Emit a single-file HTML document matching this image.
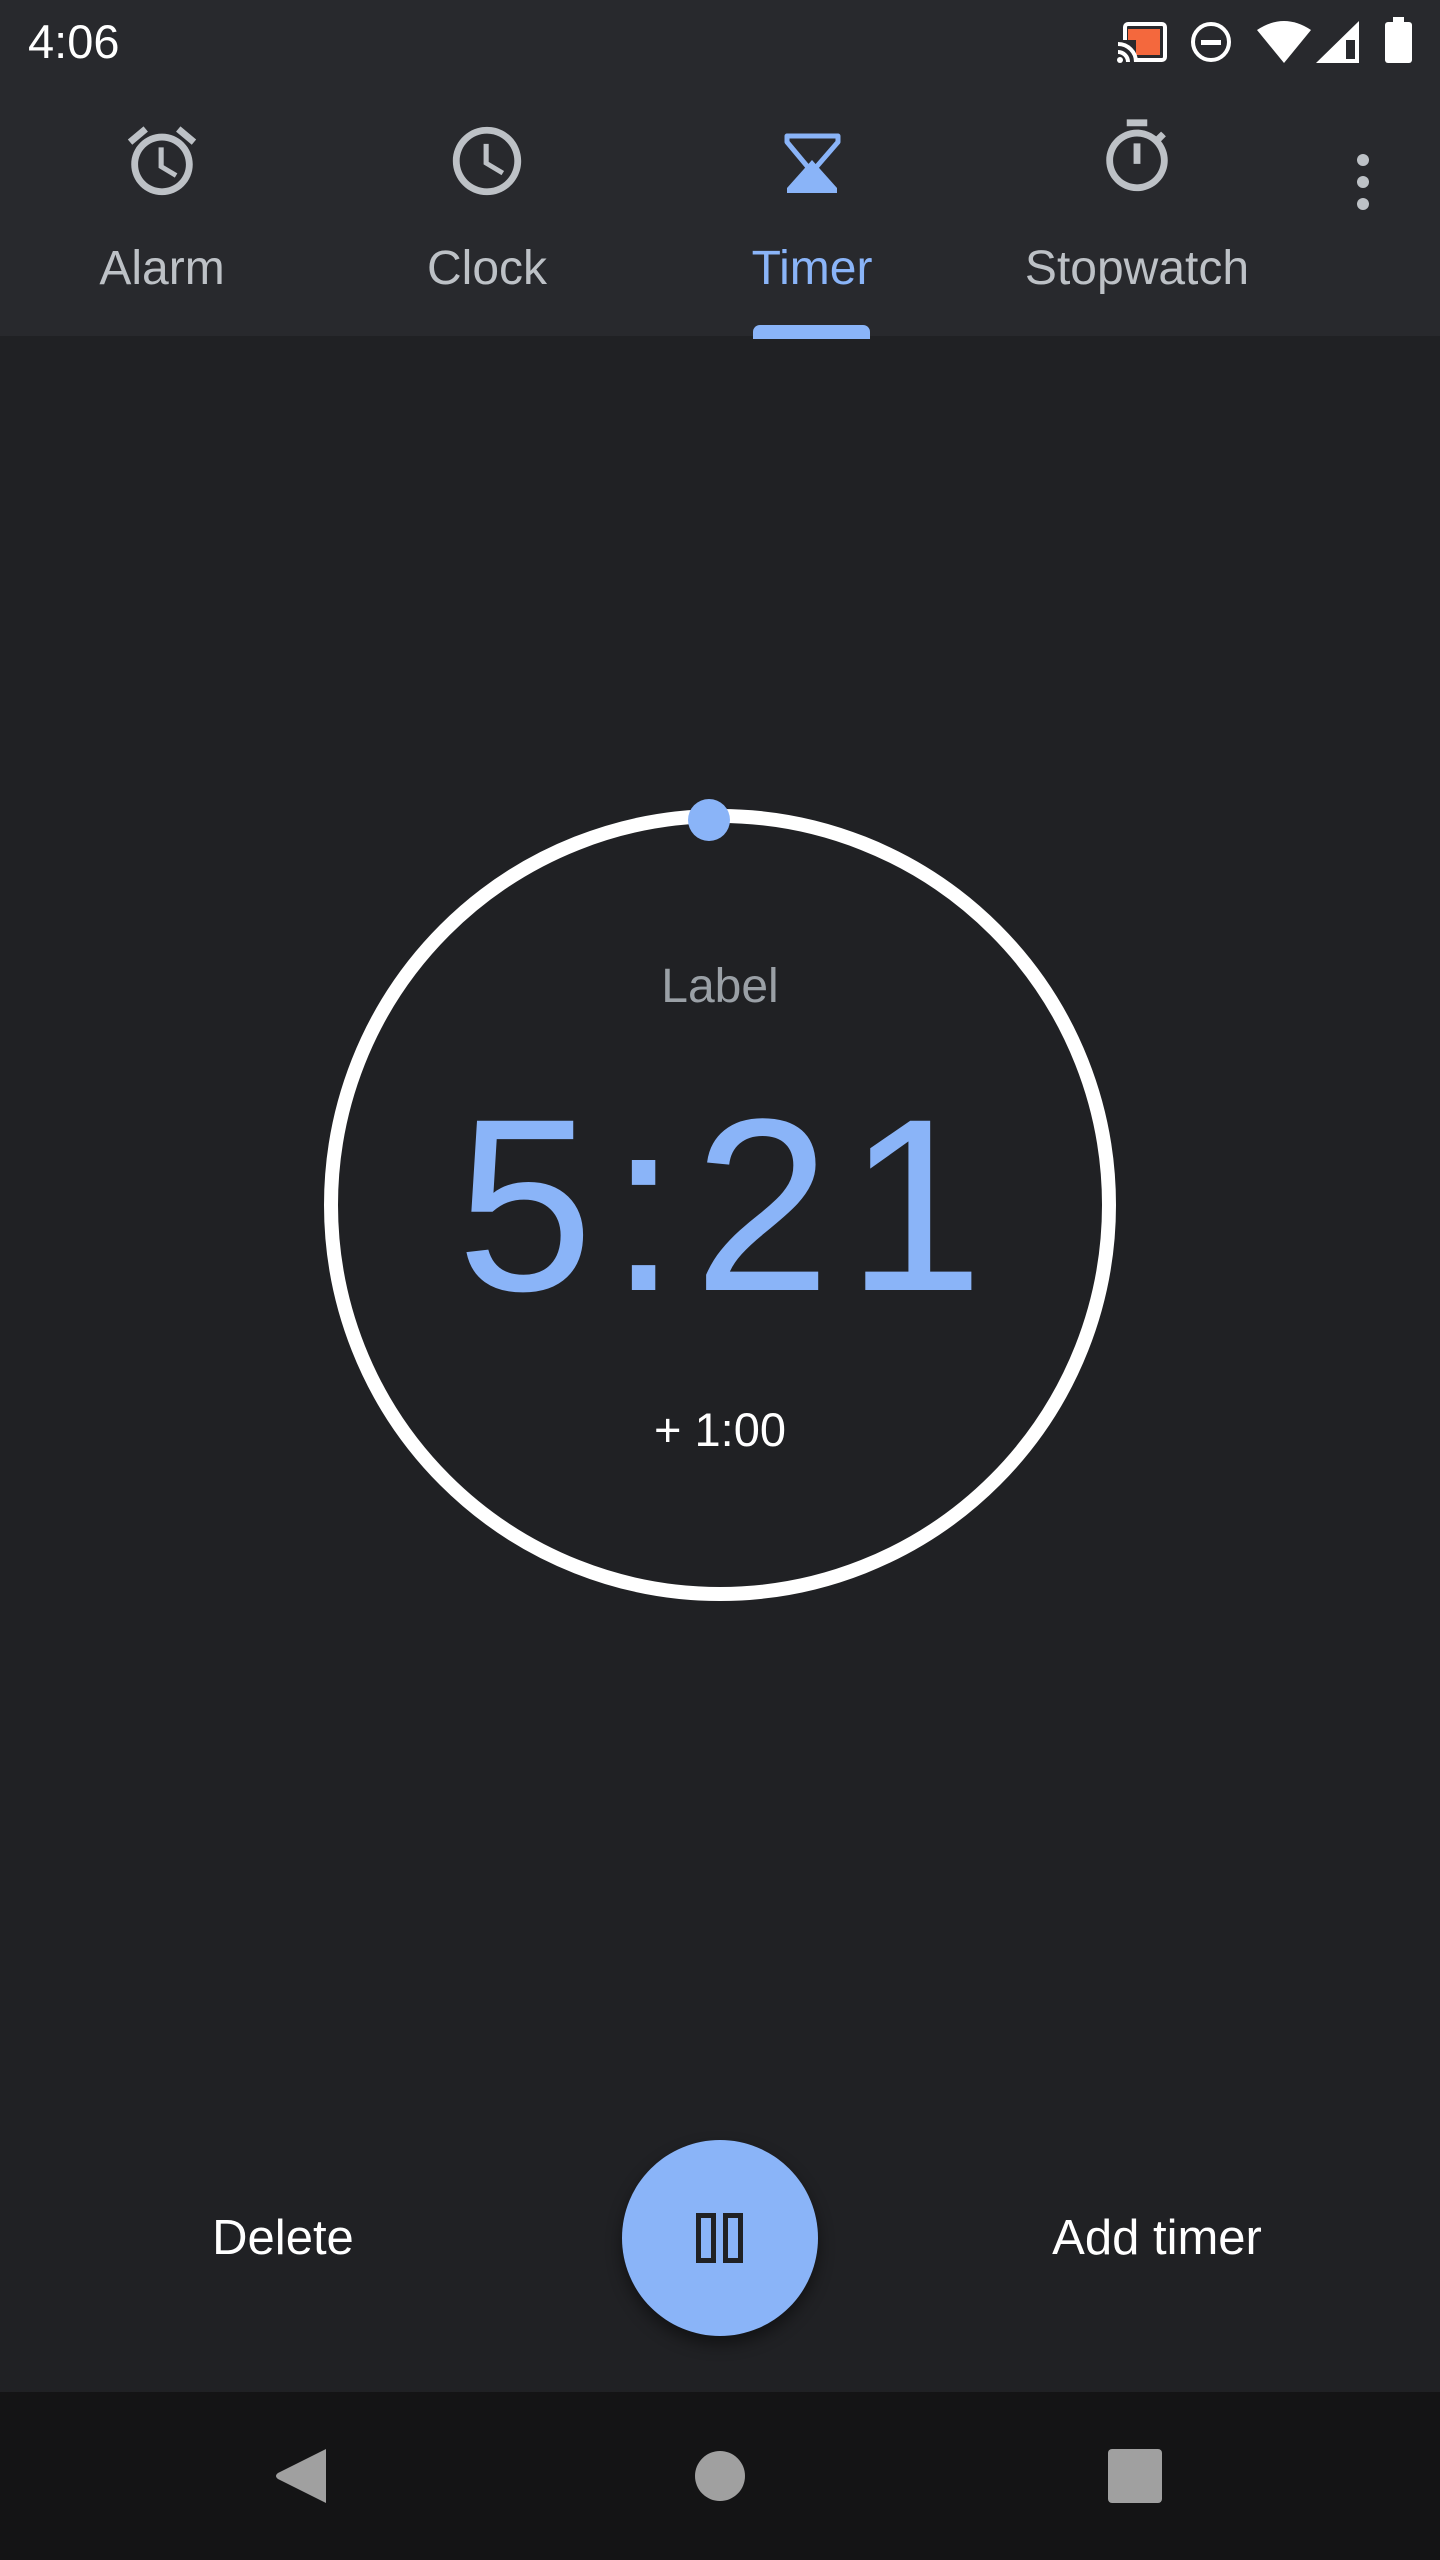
<!DOCTYPE html>
<html><head><meta charset="utf-8"><style>
*{margin:0;padding:0;box-sizing:border-box}
body{width:1440px;height:2560px;background:#202124;position:relative;overflow:hidden;font-family:"Liberation Sans",sans-serif}
.top{position:absolute;left:0;top:0;width:1440px;height:336px;background:#28292d}
.abs{position:absolute}
.tab{position:absolute;top:243px;width:300px;text-align:center;font-size:48px;color:#bdc1c6;line-height:52px}
.c{position:absolute;left:0;width:1440px;text-align:center}
.nav{position:absolute;left:0;top:2392px;width:1440px;height:168px;background:#141415}
</style></head><body>
<div class="top"></div>
<div class="abs" style="left:28px;top:16px;font-size:47px;color:#fff;line-height:52px">4:06</div>
<svg class="abs" style="left:1110px;top:14px" width="320" height="56" viewBox="1110 14 320 56">
  <rect x="1125" y="24" width="40" height="36" rx="3" fill="none" stroke="#fff" stroke-width="4"/>
  <rect x="1128" y="29" width="32" height="26" fill="#f4683d"/>
  <rect x="1116" y="40" width="20" height="24" fill="#28292d"/>
  <path d="M1118 44a18 18 0 0 1 18 18M1118 52a10 10 0 0 1 10 10" fill="none" stroke="#fff" stroke-width="4"/>
  <circle cx="1120" cy="60" r="3" fill="#fff"/>
  <circle cx="1211" cy="42" r="18" fill="none" stroke="#fff" stroke-width="4"/>
  <rect x="1201" y="40" width="20" height="5" fill="#fff"/>
  <path d="M1257 30Q1284 12 1311 30L1284 63Z" fill="#fff"/>
  <path d="M1359 21V63H1316Z" fill="#fff"/>
  <rect x="1346" y="40" width="9" height="19" fill="#28292d"/>
  <rect x="1385" y="22" width="27" height="41" rx="3" fill="#fff"/>
  <rect x="1393" y="17" width="11" height="6" fill="#fff"/>
</svg>
<!-- tab icons -->
<svg class="abs" style="left:121px;top:120px" width="82" height="82" viewBox="0 0 24 24" fill="#bdc1c6"><path d="M22 5.72l-4.6-3.86-1.29 1.53 4.6 3.86L22 5.72zM7.88 3.39L6.6 1.86 2 5.71l1.29 1.53 4.59-3.85zM12.5 8H11v6l4.75 2.85.75-1.23-4-2.37V8zM12 4c-4.97 0-9 4.03-9 9s4.02 9 9 9c4.97 0 9-4.03 9-9s-4.03-9-9-9zm0 16c-3.87 0-7-3.13-7-7s3.130-7 7-7 7 3.13 7 7-3.13 7-7 7z"/></svg>
<svg class="abs" style="left:446px;top:120px" width="82" height="82" viewBox="0 0 24 24" fill="#bdc1c6"><path d="M11.99 2C6.47 2 2 6.48 2 12s4.47 10 9.99 10C17.52 22 22 17.52 22 12S17.52 2 11.99 2zM12 20c-4.42 0-8-3.58-8-8s3.58-8 8-8 8 3.58 8 8-3.58 8-8 8zM12.5 7H11v6l5.25 3.15.75-1.23-4.5-2.67z"/></svg>
<svg class="abs" style="left:780px;top:130px" width="64" height="66" viewBox="780 130 64 66">
  <path d="M787 136H838V142L812 172L787 142Z" fill="none" stroke="#8ab4f8" stroke-width="5" stroke-linejoin="round"/>
  <path d="M812 160L837 188V193H787V188Z" fill="#8ab4f8"/>
</svg>
<svg class="abs" style="left:1096px;top:116px" width="82" height="82" viewBox="0 0 24 24" fill="#bdc1c6"><path d="M15 1H9v2h6V1zm-4 13h2V8h-2v6zm8.03-6.61l1.42-1.42c-.43-.51-.9-.99-1.41-1.41l-1.42 1.42C16.07 4.74 14.12 4 12 4c-4.97 0-9 4.03-9 9s4.02 9 9 9 9-4.03 9-9c0-2.12-.74-4.07-1.97-5.61zM12 20c-3.87 0-7-3.13-7-7s3.13-7 7-7 7 3.13 7 7-3.13 7-7 7z"/></svg>
<div class="abs" style="left:1357px;top:154px;width:12px;height:12px;border-radius:6px;background:#bdc1c6"></div>
<div class="abs" style="left:1357px;top:176px;width:12px;height:12px;border-radius:6px;background:#bdc1c6"></div>
<div class="abs" style="left:1357px;top:198px;width:12px;height:12px;border-radius:6px;background:#bdc1c6"></div>
<div class="tab" style="left:12px">Alarm</div>
<div class="tab" style="left:337px">Clock</div>
<div class="tab" style="left:662px;color:#8ab4f8">Timer</div>
<div class="tab" style="left:987px">Stopwatch</div>
<div class="abs" style="left:753px;top:325px;width:117px;height:14px;border-radius:7px 7px 0 0;background:#8ab4f8"></div>
<!-- circle -->
<svg class="abs" style="left:0;top:780px" width="1440" height="840" viewBox="0 780 1440 840">
  <circle cx="720" cy="1205" r="389" fill="none" stroke="#fff" stroke-width="14"/>
  <circle cx="709" cy="820" r="21" fill="#8ab4f8"/>
</svg>
<div class="c" style="top:960px;font-size:48px;color:#9aa0a6;line-height:54px">Label</div>
<div class="c" style="top:1076px;font-size:246px;color:#8ab4f8;line-height:260px;letter-spacing:16px;padding-left:16px">5:21</div>
<div class="c" style="top:1404px;font-size:47px;color:#fff;line-height:52px">+ 1:00</div>
<!-- bottom -->
<div class="abs" style="left:0;top:2212px;width:566px;text-align:center;font-size:49px;color:#fff;line-height:52px">Delete</div>
<div class="abs" style="left:1000px;top:2212px;width:314px;text-align:center;font-size:49px;color:#fff;line-height:52px">Add timer</div>
<div class="abs" style="left:622px;top:2140px;width:196px;height:196px;border-radius:50%;background:#8ab4f8;box-shadow:0 8px 16px rgba(0,0,0,.45)"></div>
<div class="abs" style="left:696px;top:2213px;width:20px;height:50px;border:5px solid #202124"></div>
<div class="abs" style="left:723px;top:2213px;width:20px;height:50px;border:5px solid #202124"></div>
<div class="nav"></div>
<svg class="abs" style="left:0;top:2440px" width="1440" height="70" viewBox="0 2440 1440 70">
  <path d="M326 2449V2503L278 2479Q274 2476 278 2473Z" fill="#a0a0a0"/>
  <circle cx="720" cy="2476" r="25" fill="#a0a0a0"/>
  <rect x="1108" y="2449" width="54" height="54" rx="4" fill="#a0a0a0"/>
</svg>
</body></html>
